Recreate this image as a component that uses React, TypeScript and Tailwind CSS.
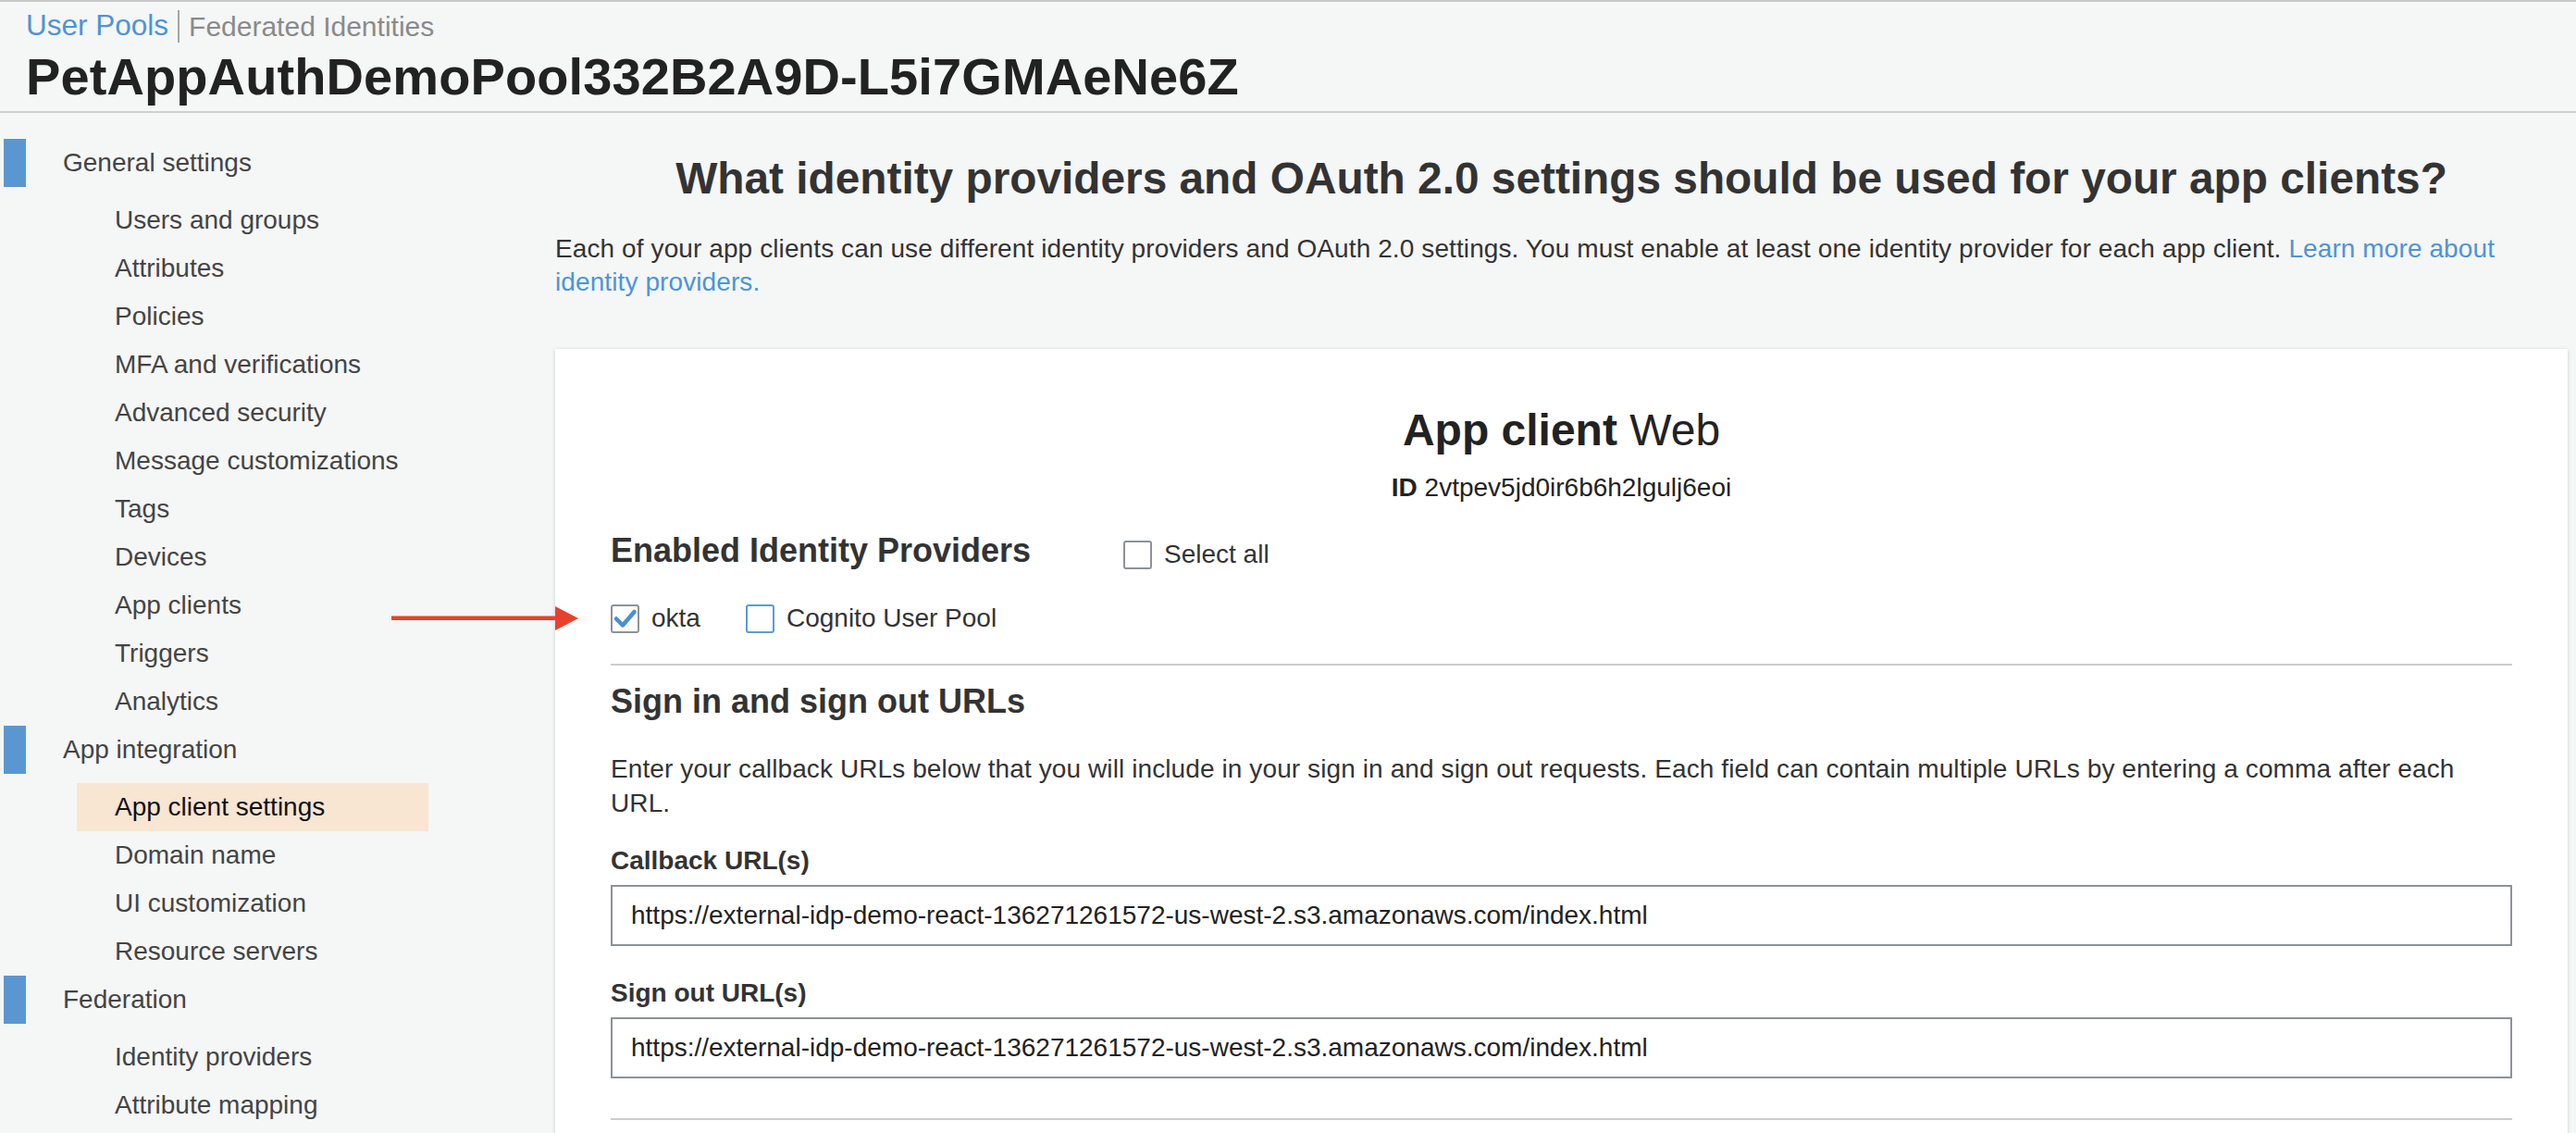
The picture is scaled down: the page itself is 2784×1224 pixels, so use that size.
const navGroups = [
  {
    title: "General settings",
    items: [
      "Users and groups",
      "Attributes",
      "Policies",
      "MFA and verifications",
      "Advanced security",
      "Message customizations",
      "Tags",
      "Devices",
      "App clients",
      "Triggers",
      "Analytics",
    ],
  },
  {
    title: "App integration",
    items: ["App client settings", "Domain name", "UI customization", "Resource servers"],
  },
  {
    title: "Federation",
    items: ["Identity providers", "Attribute mapping"],
  },
];

const activeItem = "App client settings";
const appUrl = "https://external-idp-demo-react-136271261572-us-west-2.s3.amazonaws.com/index.html";

function Checkbox({ label, checked, focused }: { label: string; checked?: boolean; focused?: boolean }) {
  return (
    <label className="flex items-center">
      <span
        className={
          focused
            ? "flex h-[31px] w-[31px] items-center justify-center rounded-[3px] border-2 border-[#5b9bd5] bg-white"
            : "flex h-[31px] w-[31px] items-center justify-center rounded-[3px] border-2 border-[#8e9297] bg-white"
        }
      >
        {checked && (
          <svg width="27" height="27" viewBox="0 0 27 27" fill="none">
            <path
              d="M4 13.5 L11 20.5 L23.5 6"
              stroke="#4a8fd6"
              strokeWidth="4.5"
              strokeLinecap="round"
              strokeLinejoin="round"
            />
          </svg>
        )}
      </span>
      <span className="ml-[13px] text-[28px] leading-[36px] text-[#333]">{label}</span>
    </label>
  );
}

function Sidebar() {
  return (
    <nav className="w-[600px] shrink-0 pt-[28px]">
      {navGroups.map((group) => (
        <div key={group.title}>
          <div className="flex h-[52px] items-center">
            <div className="ml-[4px] h-[52px] w-[24px] bg-[#5a97d2]"></div>
            <span className="ml-[40px] text-[28px] text-[#444]">{group.title}</span>
          </div>
          <ul className="mt-[10px]">
            {group.items.map((item) => (
              <li
                key={item}
                className={
                  item === activeItem
                    ? "ml-[83px] flex h-[52px] w-[380px] items-center bg-[#f8e5d2] pl-[41px] text-[28px] text-[#111]"
                    : "ml-[83px] flex h-[52px] w-[380px] items-center pl-[41px] text-[28px] text-[#444]"
                }
              >
                {item}
              </li>
            ))}
          </ul>
        </div>
      ))}
    </nav>
  );
}

function UrlField({ label, value }: { label: string; value: string }) {
  return (
    <div>
      <div className="text-[28px] font-bold leading-[36px] text-[#333]">{label}</div>
      <input
        readOnly
        value={value}
        className="mt-[8px] h-[66px] w-full border-2 border-[#8d9297] bg-white pl-[20px] text-[28px] text-[#222] outline-none"
      />
    </div>
  );
}

export default function App() {
  return (
    <div className="relative h-[1224px] w-full overflow-hidden bg-[#f5f6f6] font-['Liberation_Sans',Arial,sans-serif]">
      <header className="border-t-2 border-b-2 border-t-[#c8c9c9] border-b-[#cfd0d0] px-[28px] pt-[8px]">
        <div className="flex h-[36px] items-center">
          <a className="text-[31.5px] text-[#4d94d6]">User Pools</a>
          <span className="mx-[10px] h-[35px] w-[2px] bg-[#a5a5a5]"></span>
          <a className="text-[30px] text-[#8a8a8a]">Federated Identities</a>
        </div>
        <h1 className="text-[56px] font-bold leading-[74px] tracking-[0.1px] text-[#222]">
          PetAppAuthDemoPool332B2A9D-L5i7GMAeNe6Z
        </h1>
      </header>

      <div className="flex">
        <Sidebar />

        <main className="flex-1 pr-[9px]">
          <h2 className="pt-[41px] text-center text-[47.8px] font-bold leading-[60px] text-[#333]">
            What identity providers and OAuth 2.0 settings should be used for your app clients?
          </h2>
          <p className="mt-[28px] pr-[20px] text-[28px] leading-[36px] tracking-[0.1px] text-[#333]">
            Each of your app clients can use different identity providers and OAuth 2.0 settings. You must enable at
            least one identity provider for each app client.{" "}
            <a className="text-[#4d94d6]">Learn more about identity providers.</a>
          </p>

          <section className="mt-[54px] bg-white px-[60px] pt-[58px] pb-[80px] shadow-[0_1px_4px_rgba(0,0,0,0.18)]">
            <div className="text-center text-[48px] leading-[60px] text-[#222]">
              <span className="font-bold">App client</span> Web
            </div>
            <div className="mt-[14px] text-center text-[28px] leading-[36px] text-[#222]">
              <span className="font-bold">ID</span> 2vtpev5jd0ir6b6h2lgulj6eoi
            </div>

            <div className="mt-[28px] flex h-[44px] items-start">
              <h3 className="w-[554px] text-[36px] font-bold leading-[44px] text-[#333]">Enabled Identity Providers</h3>
              <div className="mt-[8px]">
                <Checkbox label="Select all" />
              </div>
            </div>

            <div className="mt-[33px] flex items-center gap-[49px]">
              <Checkbox label="okta" checked />
              <Checkbox label="Cognito User Pool" focused />
            </div>

            <div className="mt-[31px] h-[2px] bg-[#cccccc]"></div>

            <h3 className="mt-[17px] text-[36px] font-bold leading-[44px] text-[#333]">Sign in and sign out URLs</h3>
            <p className="mt-[32px] text-[28px] leading-[37px] tracking-[0.1px] text-[#333]">
              Enter your callback URLs below that you will include in your sign in and sign out requests. Each field
              can contain multiple URLs by entering a comma after each
              <br />
              URL.
            </p>

            <div className="mt-[26px]">
              <UrlField label="Callback URL(s)" value={appUrl} />
            </div>
            <div className="mt-[33px]">
              <UrlField label="Sign out URL(s)" value={appUrl} />
            </div>

            <div className="mt-[43px] h-[2px] bg-[#cccccc]"></div>
          </section>
        </main>
      </div>

      {/* annotation arrow pointing at the okta checkbox */}
      <svg className="absolute left-[423px] top-[654px]" width="204" height="28" viewBox="0 0 204 28">
        <rect x="0" y="11.5" width="180" height="4.5" fill="#e8412b" />
        <polygon points="177,1 202,14 177,27" fill="#e8412b" />
      </svg>
    </div>
  );
}
